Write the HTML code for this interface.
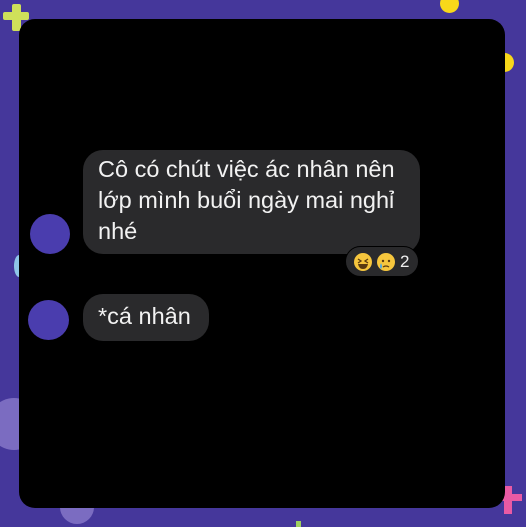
<!DOCTYPE html>
<html><head><meta charset="utf-8"><style>
body{margin:0;width:526px;height:526px;background:#45379b;position:relative;overflow:hidden;font-family:"Liberation Sans",sans-serif}
.a{position:absolute}
.card{left:19px;top:19px;width:486px;height:489px;background:#000;border-radius:16px}
.b{background:#2a2a2c;color:#f2f2f2;font-size:23.5px;line-height:31px;border-radius:20px;white-space:nowrap}
</style></head><body>
<div class="a" style="left:3px;top:12px;width:26px;height:8px;background:#cfe05a;border-radius:2px"></div>
<div class="a" style="left:12px;top:4px;width:9px;height:27px;background:#cfe05a;border-radius:2px"></div>
<div class="a" style="left:440px;top:-6px;width:19px;height:19px;border-radius:50%;background:#f8d81a"></div>
<div class="a" style="left:495px;top:53px;width:19px;height:19px;border-radius:50%;background:#f8d81a"></div>
<div class="a" style="left:-12px;top:398px;width:52px;height:52px;border-radius:50%;background:#7b6cc1"></div>
<div class="a" style="left:60px;top:490px;width:34px;height:34px;border-radius:50%;background:#7b6cc1"></div>
<div class="a" style="left:14px;top:255px;width:10px;height:22px;border-radius:50%;background:#8ec6e8"></div>
<div class="a" style="left:502px;top:494px;width:20px;height:7px;background:#e95aa4"></div>
<div class="a" style="left:504px;top:486px;width:8px;height:28px;background:#e95aa4"></div>
<div class="a" style="left:296px;top:521px;width:5px;height:6px;background:#9fd060"></div>
<div class="a card"></div>
<div class="a" style="left:30px;top:214px;width:40px;height:40px;border-radius:50%;background:#4a3dae"></div>
<div class="a" style="left:28px;top:300px;width:41px;height:40px;border-radius:50%;background:#4a3dae"></div>
<div class="a b" style="left:83px;top:150px;width:337px;height:104px;box-sizing:border-box;padding:4px 0 0 15px">Cô có chút việc ác nhân nên<br>lớp mình buổi ngày mai nghỉ<br>nhé</div>
<div class="a b" style="left:83px;top:294px;width:126px;height:47px;box-sizing:border-box;padding:7px 0 0 15px">*cá nhân</div>
<div class="a" style="left:345px;top:246px;width:74px;height:31px;border-radius:16px;background:#2a2a2c;border:1px solid #000;box-sizing:border-box"></div>
<svg class="a" style="left:353px;top:251px" width="44" height="22" viewBox="0 0 44 22">
<circle cx="10" cy="11" r="9" fill="#f6c63d"/><path d="M5 8l3 2-3 2M15 8l-3 2 3 2" stroke="#5a3b10" stroke-width="1.3" fill="none"/><path d="M5 13h10q-1 5-5 5t-5-5z" fill="#5a3b10"/>
<circle cx="33" cy="11" r="9" fill="#f6c63d"/><circle cx="30" cy="10" r="1.2" fill="#5a3b10"/><circle cx="36" cy="10" r="1.2" fill="#5a3b10"/><path d="M30 16q3-2 6 0" stroke="#5a3b10" stroke-width="1.3" fill="none"/><path d="M28 12q-2 4 0 6q2-2 0-6z" fill="#4aa8e8"/>
</svg>
<div class="a" style="left:400px;top:251px;color:#eee;font-size:17px;line-height:22px">2</div>
</body></html>
